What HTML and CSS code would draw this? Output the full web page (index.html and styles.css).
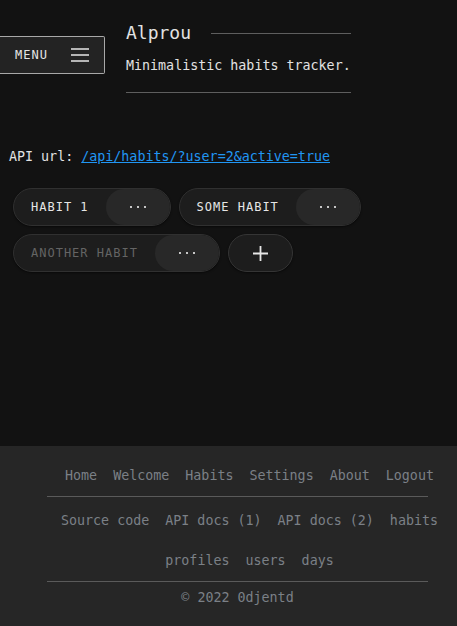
FILE: index.html
```html
<!DOCTYPE html>
<html lang="en">
<head>
<meta charset="utf-8">
<title>Alprou</title>
<link rel="stylesheet" href="styles.css">
</head>
<body>
<main class="main">
  <div class="top">
    <button class="menu-btn">
      <span class="menu-label">MENU</span>
      <svg class="menu-icon" width="18" height="14" viewBox="0 0 18 14"><path d="M0 1H18M0 7H18M0 13H18" stroke="#e6e6e6" stroke-width="1.6"/></svg>
    </button>
    <header class="header">
      <div class="title-row">
        <h1 class="title">Alprou</h1>
        <span class="title-line"></span>
      </div>
      <p class="subtitle">Minimalistic habits tracker.</p>
      <hr class="header-rule">
    </header>
  </div>
  <p class="api">API url: <a class="api-link" href="#">/api/habits/?user=2&amp;active=true</a></p>
  <div class="habits">
    <div class="chip"><span class="chip-label">HABIT 1</span><span class="chip-more"><svg width="18" height="4" viewBox="0 0 18 4"><circle cx="2" cy="2" r="1.1" fill="#eee"/><circle cx="9" cy="2" r="1.1" fill="#eee"/><circle cx="16" cy="2" r="1.1" fill="#eee"/></svg></span></div>
    <div class="chip"><span class="chip-label">SOME HABIT</span><span class="chip-more"><svg width="18" height="4" viewBox="0 0 18 4"><circle cx="2" cy="2" r="1.1" fill="#eee"/><circle cx="9" cy="2" r="1.1" fill="#eee"/><circle cx="16" cy="2" r="1.1" fill="#eee"/></svg></span></div>
    <div class="chip"><span class="chip-label chip-label-off">ANOTHER HABIT</span><span class="chip-more"><svg width="18" height="4" viewBox="0 0 18 4"><circle cx="2" cy="2" r="1.1" fill="#eee"/><circle cx="9" cy="2" r="1.1" fill="#eee"/><circle cx="16" cy="2" r="1.1" fill="#eee"/></svg></span></div>
    <button class="add-btn"><svg width="15" height="15" viewBox="0 0 15 15"><path d="M7.5 0V15M0 7.5H15" stroke="#e6e6e6" stroke-width="1.8"/></svg></button>
  </div>
</main>
<footer class="footer">
  <nav class="links">
    <a href="#">Home</a><a href="#">Welcome</a><a href="#">Habits</a><a href="#">Settings</a><a href="#">About</a><a href="#">Logout</a>
  </nav>
  <hr class="footer-rule">
  <nav class="links links-second">
    <a href="#">Source code</a><a href="#">API docs (1)</a><a href="#">API docs (2)</a><a href="#">habits</a><a href="#">profiles</a><a href="#">users</a><a href="#">days</a>
  </nav>
  <hr class="footer-rule">
  <p class="copy">© 2022 0djentd</p>
</footer>
</body>
</html>
```
FILE: styles.css
```css
* { box-sizing: border-box; }
html, body {
  margin: 0;
  background: #121212;
  color: #e2e2e2;
  font-family: "DejaVu Sans Mono", "Liberation Mono", monospace;
  font-size: 13.33px;
}
.main {
  height: 446px;
}
.top {
  display: flex;
  align-items: flex-start;
}
.menu-btn {
  margin-top: 36px;
  width: 105px;
  height: 38px;
  display: flex;
  align-items: center;
  justify-content: space-between;
  padding: 0 15px;
  background: #232323;
  border: 1px solid #a8a8a8;
  border-left: none;
  border-radius: 0 2px 2px 0;
  color: #e6e6e6;
  font-family: inherit;
  font-size: 12px;
  letter-spacing: 1px;
}
.menu-icon { display: block; }
.header {
  margin-left: 21px;
  padding-top: 21px;
}
.title-row {
  display: flex;
  align-items: center;
  gap: 20px;
}
.title {
  margin: 0;
  font-size: 18px;
  font-weight: normal;
  line-height: 24px;
}
.title-line {
  flex: 1;
  height: 1px;
  background: #5e5e5e;
}
.subtitle {
  margin: 12px 0 0 0;
  line-height: 18px;
  white-space: nowrap;
}
.header-rule {
  margin: 17px 0 0 0;
  border: none;
  height: 1px;
  background: #5e5e5e;
}
.api {
  margin: 54px 0 0 9px;
  line-height: 20px;
}
.api-link {
  color: #2196f3;
  text-decoration: underline;
}
.habits {
  display: flex;
  flex-wrap: wrap;
  gap: 8px;
  margin: 21px 0 0 13px;
  width: 360px;
}
.chip {
  display: flex;
  height: 38px;
  border: 1px solid #303030;
  border-radius: 19px;
  background: #1d1d1d;
  overflow: hidden;
  box-shadow: 0 1px 2px rgba(0,0,0,0.5);
}
.chip-label {
  display: flex;
  align-items: center;
  padding: 0 17px 0 17px;
  font-size: 12px;
  letter-spacing: 1px;
  color: #e6e6e6;
}
.chip-label-off { color: #646464; }
.chip-more {
  display: flex;
  align-items: center;
  justify-content: center;
  width: 64px;
  background: #282828;
  border-radius: 19px;
}
.add-btn {
  width: 65px;
  height: 38px;
  display: flex;
  align-items: center;
  justify-content: center;
  border: 1px solid #353535;
  border-radius: 19px;
  background: #1d1d1d;
  padding: 0;
  box-shadow: 0 1px 2px rgba(0,0,0,0.5);
}
.footer {
  background: #262626;
  padding: 10px 29px 20px 47px;
}
.links {
  display: flex;
  flex-wrap: wrap;
  justify-content: center;
  margin-right: -24px;
}
.links-second { margin-top: 4px; }
.links a {
  color: #7b8086;
  text-decoration: none;
  padding: 0 8px;
  line-height: 40px;
}
.footer-rule {
  margin: 0;
  border: none;
  height: 1px;
  background: #5a5a5a;
}
.copy {
  margin: 6px 0 0 0;
  text-align: center;
  color: #7b8086;
  line-height: 20px;
}
```
